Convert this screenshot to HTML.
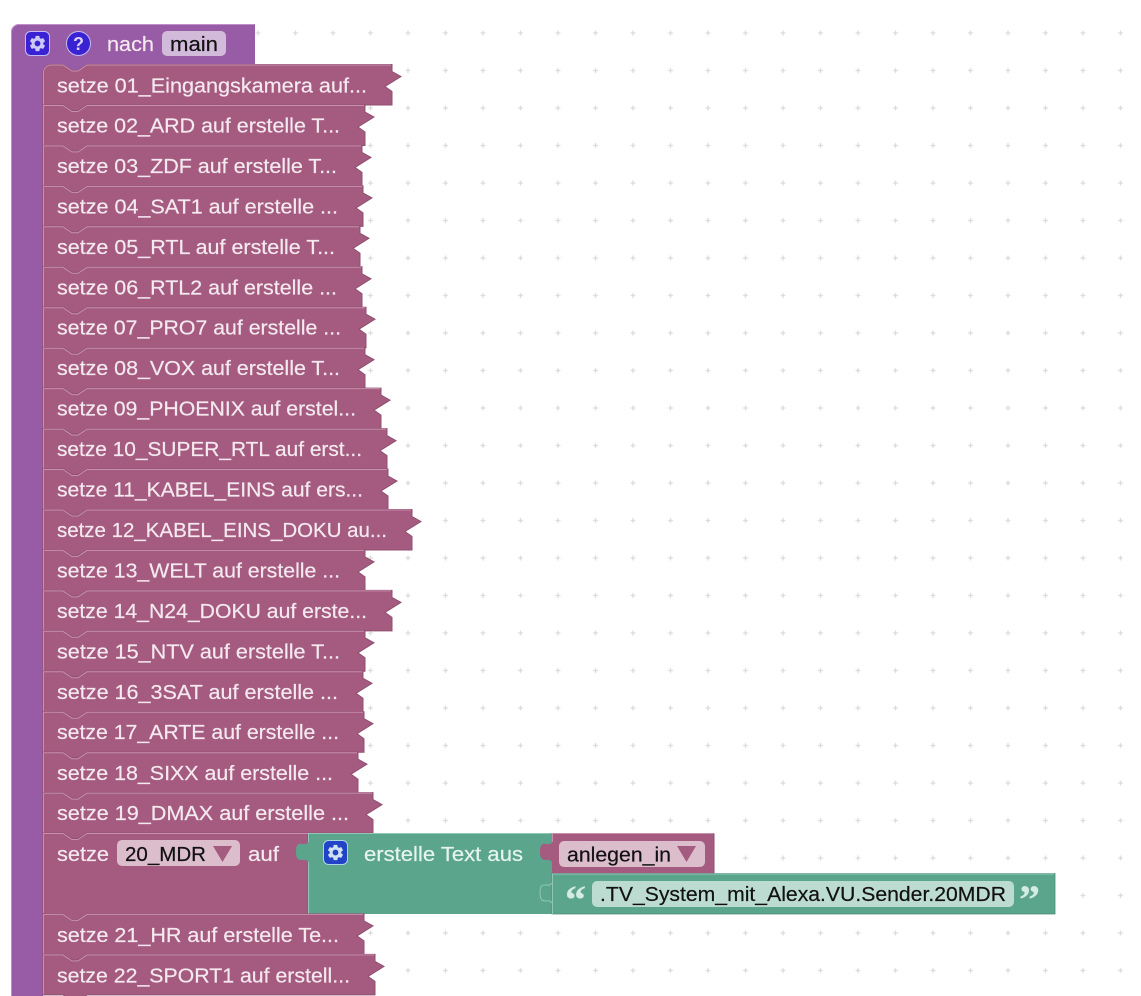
<!DOCTYPE html>
<html><head><meta charset="utf-8"><title>Blocks</title>
<style>
html,body{margin:0;padding:0;background:#fff;width:1141px;height:996px;overflow:hidden}
svg{display:block}
text{font-family:"Liberation Sans",sans-serif;font-size:20.5px;stroke-width:.2}
.w{fill:#f4e9ef;stroke:#f4e9ef}
.b{fill:#111;stroke:#111}
.r{fill:#a55b80;stroke:#8f4f6f;stroke-width:1}
.l{fill:none;stroke:#c78fab;stroke-width:1}
</style></head><body>
<svg width="1141" height="996" viewBox="0 0 1141 996" xmlns="http://www.w3.org/2000/svg">
<defs>
<pattern id="g" patternUnits="userSpaceOnUse" x="14.25" y="14.25" width="37.5" height="37.5">
<path d="M16.25,18.75h5M18.75,16.25v5" stroke="#d6d6d6" stroke-width="1.1"/>
</pattern>
<path id="gear" d="M19.14 12.94c.04-.3.06-.61.06-.94 0-.32-.02-.64-.07-.94l2.03-1.58c.18-.14.23-.41.12-.61l-1.92-3.32c-.12-.22-.37-.29-.59-.22l-2.39.96c-.5-.38-1.03-.7-1.62-.94l-.36-2.54c-.04-.24-.24-.41-.48-.41h-3.84c-.24 0-.43.17-.47.41l-.36 2.54c-.59.24-1.13.57-1.62.94l-2.39-.96c-.22-.08-.47 0-.59.22L2.74 8.87c-.12.21-.08.47.12.61l2.03 1.58c-.05.3-.09.63-.09.94s.02.64.07.94l-2.03 1.58c-.18.14-.23.41-.12.61l1.92 3.32c.12.22.37.29.59.22l2.39-.96c.5.38 1.03.7 1.62.94l.36 2.54c.05.24.24.41.48.41h3.84c.24 0 .44-.17.47-.41l.36-2.54c.59-.24 1.13-.56 1.62-.94l2.39.96c.22.08.47 0 .59-.22l1.92-3.32c.12-.22.07-.47-.12-.61l-2.01-1.58zM12 15.6c-1.98 0-3.6-1.62-3.6-3.6s1.62-3.6 3.6-3.6 3.6 1.62 3.6 3.6-1.62 3.6-3.6 3.6z"/>
</defs>
<rect width="1141" height="996" fill="#fff"/>
<rect width="1141" height="996" fill="url(#g)"/>

<!-- hat block -->
<path d="M11,996V32a8,8 0 0 1 8,-8H255V65H90V76H43V996Z" fill="#985ba6"/>
<path d="M11.5,996V32a7.5,7.5 0 0 1 7.5,-7.5H254.5" fill="none" stroke="#c08fcb" stroke-width="1"/>
<rect x="25.5" y="31.5" width="24" height="24" rx="5" fill="#3a22d2" stroke="#c3bcf2" stroke-width="1"/>
<use href="#gear" transform="translate(27.9,33.9) scale(.8)" fill="#cfc9f7"/>
<circle cx="78.5" cy="43.5" r="12" fill="#3a22d2" stroke="#c3bcf2" stroke-width="1"/>
<text x="78.5" y="50" text-anchor="middle" style="font-size:18px;font-weight:bold" fill="#d8d3fa">?</text>
<text class="w" x="107" y="51" textLength="47" lengthAdjust="spacingAndGlyphs">nach</text>
<rect x="162" y="31" width="64" height="25" rx="5" fill="#d2bada"/>
<text class="b" x="170" y="51" textLength="48" lengthAdjust="spacingAndGlyphs">main</text>

<!-- rows -->
<g transform="translate(0,64.5)"><path class="r" d="M43,8a8,8 0 0 1 8,-8H63L72,6H78L87,0H392V7L401,12L385,22L392,27V40.5H87L78,46H72L63,40.5H43Z"/><path class="l" d="M43.5,40V8a7.5,7.5 0 0 1 7.5,-7.5H63L72,6.5H78L87,.5H391"/><text class="w" x="57" y="28" textLength="310" lengthAdjust="spacingAndGlyphs">setze 01_Eingangskamera auf...</text></g>
<g transform="translate(0,105)"><path class="r" d="M43,0H63L72,6H78L87,0H365V7L374,12L358,22L365,27V40.5H87L78,46H72L63,40.5H43Z"/><path class="l" d="M43.5,40V.5H63L72,6.5H78L87,.5H364"/><text class="w" x="57" y="27.5" textLength="283" lengthAdjust="spacingAndGlyphs">setze 02_ARD auf erstelle T...</text></g>
<g transform="translate(0,145.4)"><path class="r" d="M43,0H63L72,6H78L87,0H362V7L371,12L355,22L362,27V40.5H87L78,46H72L63,40.5H43Z"/><path class="l" d="M43.5,40V.5H63L72,6.5H78L87,.5H361"/><text class="w" x="57" y="27.5" textLength="280" lengthAdjust="spacingAndGlyphs">setze 03_ZDF auf erstelle T...</text></g>
<g transform="translate(0,185.9)"><path class="r" d="M43,0H63L72,6H78L87,0H363V7L372,12L356,22L363,27V40.5H87L78,46H72L63,40.5H43Z"/><path class="l" d="M43.5,40V.5H63L72,6.5H78L87,.5H362"/><text class="w" x="57" y="27.5" textLength="281" lengthAdjust="spacingAndGlyphs">setze 04_SAT1 auf erstelle ...</text></g>
<g transform="translate(0,226.3)"><path class="r" d="M43,0H63L72,6H78L87,0H360V7L369,12L353,22L360,27V40.5H87L78,46H72L63,40.5H43Z"/><path class="l" d="M43.5,40V.5H63L72,6.5H78L87,.5H359"/><text class="w" x="57" y="27.5" textLength="278" lengthAdjust="spacingAndGlyphs">setze 05_RTL auf erstelle T...</text></g>
<g transform="translate(0,266.8)"><path class="r" d="M43,0H63L72,6H78L87,0H362V7L371,12L355,22L362,27V40.5H87L78,46H72L63,40.5H43Z"/><path class="l" d="M43.5,40V.5H63L72,6.5H78L87,.5H361"/><text class="w" x="57" y="27.5" textLength="280" lengthAdjust="spacingAndGlyphs">setze 06_RTL2 auf erstelle ...</text></g>
<g transform="translate(0,307.2)"><path class="r" d="M43,0H63L72,6H78L87,0H366V7L375,12L359,22L366,27V40.5H87L78,46H72L63,40.5H43Z"/><path class="l" d="M43.5,40V.5H63L72,6.5H78L87,.5H365"/><text class="w" x="57" y="27.5" textLength="284" lengthAdjust="spacingAndGlyphs">setze 07_PRO7 auf erstelle ...</text></g>
<g transform="translate(0,347.7)"><path class="r" d="M43,0H63L72,6H78L87,0H365V7L374,12L358,22L365,27V40.5H87L78,46H72L63,40.5H43Z"/><path class="l" d="M43.5,40V.5H63L72,6.5H78L87,.5H364"/><text class="w" x="57" y="27.5" textLength="283" lengthAdjust="spacingAndGlyphs">setze 08_VOX auf erstelle T...</text></g>
<g transform="translate(0,388.1)"><path class="r" d="M43,0H63L72,6H78L87,0H381V7L390,12L374,22L381,27V40.5H87L78,46H72L63,40.5H43Z"/><path class="l" d="M43.5,40V.5H63L72,6.5H78L87,.5H380"/><text class="w" x="57" y="27.5" textLength="299" lengthAdjust="spacingAndGlyphs">setze 09_PHOENIX auf erstel...</text></g>
<g transform="translate(0,428.6)"><path class="r" d="M43,0H63L72,6H78L87,0H387V7L396,12L380,22L387,27V40.5H87L78,46H72L63,40.5H43Z"/><path class="l" d="M43.5,40V.5H63L72,6.5H78L87,.5H386"/><text class="w" x="57" y="27.5" textLength="305" lengthAdjust="spacingAndGlyphs">setze 10_SUPER_RTL auf erst...</text></g>
<g transform="translate(0,469)"><path class="r" d="M43,0H63L72,6H78L87,0H388V7L397,12L381,22L388,27V40.5H87L78,46H72L63,40.5H43Z"/><path class="l" d="M43.5,40V.5H63L72,6.5H78L87,.5H387"/><text class="w" x="57" y="27.5" textLength="306" lengthAdjust="spacingAndGlyphs">setze 11_KABEL_EINS auf ers...</text></g>
<g transform="translate(0,509.5)"><path class="r" d="M43,0H63L72,6H78L87,0H412V7L421,12L405,22L412,27V40.5H87L78,46H72L63,40.5H43Z"/><path class="l" d="M43.5,40V.5H63L72,6.5H78L87,.5H411"/><text class="w" x="57" y="27.5" textLength="330" lengthAdjust="spacingAndGlyphs">setze 12_KABEL_EINS_DOKU au...</text></g>
<g transform="translate(0,549.9)"><path class="r" d="M43,0H63L72,6H78L87,0H365V7L374,12L358,22L365,27V40.5H87L78,46H72L63,40.5H43Z"/><path class="l" d="M43.5,40V.5H63L72,6.5H78L87,.5H364"/><text class="w" x="57" y="27.5" textLength="283" lengthAdjust="spacingAndGlyphs">setze 13_WELT auf erstelle ...</text></g>
<g transform="translate(0,590.4)"><path class="r" d="M43,0H63L72,6H78L87,0H392V7L401,12L385,22L392,27V40.5H87L78,46H72L63,40.5H43Z"/><path class="l" d="M43.5,40V.5H63L72,6.5H78L87,.5H391"/><text class="w" x="57" y="27.5" textLength="310" lengthAdjust="spacingAndGlyphs">setze 14_N24_DOKU auf erste...</text></g>
<g transform="translate(0,630.8)"><path class="r" d="M43,0H63L72,6H78L87,0H365V7L374,12L358,22L365,27V40.5H87L78,46H72L63,40.5H43Z"/><path class="l" d="M43.5,40V.5H63L72,6.5H78L87,.5H364"/><text class="w" x="57" y="27.5" textLength="283" lengthAdjust="spacingAndGlyphs">setze 15_NTV auf erstelle T...</text></g>
<g transform="translate(0,671.3)"><path class="r" d="M43,0H63L72,6H78L87,0H363V7L372,12L356,22L363,27V40.5H87L78,46H72L63,40.5H43Z"/><path class="l" d="M43.5,40V.5H63L72,6.5H78L87,.5H362"/><text class="w" x="57" y="27.5" textLength="281" lengthAdjust="spacingAndGlyphs">setze 16_3SAT auf erstelle ...</text></g>
<g transform="translate(0,711.7)"><path class="r" d="M43,0H63L72,6H78L87,0H364V7L373,12L357,22L364,27V40.5H87L78,46H72L63,40.5H43Z"/><path class="l" d="M43.5,40V.5H63L72,6.5H78L87,.5H363"/><text class="w" x="57" y="27.5" textLength="282" lengthAdjust="spacingAndGlyphs">setze 17_ARTE auf erstelle ...</text></g>
<g transform="translate(0,752.2)"><path class="r" d="M43,0H63L72,6H78L87,0H358V7L367,12L351,22L358,27V40.5H87L78,46H72L63,40.5H43Z"/><path class="l" d="M43.5,40V.5H63L72,6.5H78L87,.5H357"/><text class="w" x="57" y="28" textLength="276" lengthAdjust="spacingAndGlyphs">setze 18_SIXX auf erstelle ...</text></g>
<g transform="translate(0,792.6)"><path class="r" d="M43,0H63L72,6H78L87,0H373V7L382,12L366,22L373,27V40.5H87L78,46H72L63,40.5H43Z"/><path class="l" d="M43.5,40V.5H63L72,6.5H78L87,.5H372"/><text class="w" x="57" y="27.5" textLength="292" lengthAdjust="spacingAndGlyphs">setze 19_DMAX auf erstelle ...</text></g>

<!-- row 20 -->
<g transform="translate(0,833)"><path class="r" d="M43,0H63L72,6H78L87,0H308V81H87L78,87H72L63,81H43Z"/><path class="l" d="M43.5,80V.5H63L72,6.5H78L87,.5H308"/></g>
<text class="w" x="57" y="861" textLength="52" lengthAdjust="spacingAndGlyphs">setze</text>
<rect x="117" y="840" width="123" height="26" rx="5" fill="#dbbdcc"/>
<text class="b" x="125" y="861" textLength="81" lengthAdjust="spacingAndGlyphs">20_MDR</text>
<path d="M213,846H232L222.5,862Z" fill="#a55b80"/>
<text class="w" x="248" y="861" textLength="31" lengthAdjust="spacingAndGlyphs">auf</text>

<!-- green text block -->
<path d="M308,833H552V914H308V862C305,856 296,866 296,851.500C296,838 305,848 308,842Z" fill="#5ba58c"/>
<path d="M308.500,913.500V862M308.500,842V833.500H551.500" fill="none" stroke="#93c6b4" stroke-width="1"/>
<path d="M552.500,874V914" fill="none" stroke="#93c6b4" stroke-width="1"/>
<rect x="323.500" y="840.500" width="24" height="24" rx="5" fill="#2243c6" stroke="#a8d6e6" stroke-width="1"/>
<use href="#gear" transform="translate(325.900,842.900) scale(.8)" fill="#cfe0f5"/>
<text x="364" y="861" textLength="159" lengthAdjust="spacingAndGlyphs" fill="#e6f4ef" stroke="#e6f4ef">erstelle Text aus</text>

<!-- anlegen_in -->
<path d="M552,833H714V873H552V862C549,856 540,866 540,851.500C540,838 549,848 552,842Z" fill="#a55b80"/>
<path d="M552.500,842V833.500H713.500" fill="none" stroke="#c78fab" stroke-width="1"/>
<path d="M714,833.500V873.500H552" fill="none" stroke="#8f4f6f" stroke-width="1"/>
<rect x="559" y="841" width="146" height="26" rx="5" fill="#dbbdcc"/>
<text class="b" x="567" y="861.500" textLength="104" lengthAdjust="spacingAndGlyphs">anlegen_in</text>
<path d="M677,846H696L686.500,862Z" fill="#a55b80"/>

<!-- string block -->
<path d="M552,873.500H1055V914H552Z" fill="#5ba58c" stroke="#4c8a75" stroke-width=".8"/>
<path d="M552.500,914V874H1054" fill="none" stroke="#93c6b4" stroke-width="1"/>
<path d="M552,903C549,897 540,907 540,892.500C540,879 549,889 552,883" fill="none" stroke="#93c6b4" stroke-width="1"/>
<text x="565" y="913" style="font-family:'Liberation Serif',serif;font-size:40px;font-weight:bold" fill="#d3ebe2" stroke="#d3ebe2" stroke-width=".9" textLength="21" lengthAdjust="spacingAndGlyphs">“</text>
<rect x="592" y="881" width="422" height="26" rx="5" fill="#bddcd1"/>
<text class="b" x="600" y="901" textLength="406" lengthAdjust="spacingAndGlyphs">.TV_System_mit_Alexa.VU.Sender.20MDR</text>
<text x="1019" y="913" style="font-family:'Liberation Serif',serif;font-size:40px;font-weight:bold" fill="#d3ebe2" stroke="#d3ebe2" stroke-width=".9" textLength="21" lengthAdjust="spacingAndGlyphs">”</text>

<!-- last rows -->
<g transform="translate(0,913.900)"><path class="r" d="M43,0H63L72,6H78L87,0H364V7L373,12L357,22L364,27V40.500H87L78,46H72L63,40.500H43Z"/><path class="l" d="M43.500,40V.5H63L72,6.500H78L87,.5H363"/><text class="w" x="57" y="28.100" textLength="282" lengthAdjust="spacingAndGlyphs">setze 21_HR auf erstelle Te...</text></g>
<g transform="translate(0,954.400)"><path class="r" d="M43,0H63L72,6H78L87,0H375V7L384,12L368,22L375,27V40.500H87L78,46H72L63,40.500H43Z"/><path class="l" d="M43.500,40V.5H63L72,6.500H78L87,.5H374"/><text class="w" x="57" y="28.100" textLength="293" lengthAdjust="spacingAndGlyphs">setze 22_SPORT1 auf erstell...</text></g>
</svg>
</body></html>
